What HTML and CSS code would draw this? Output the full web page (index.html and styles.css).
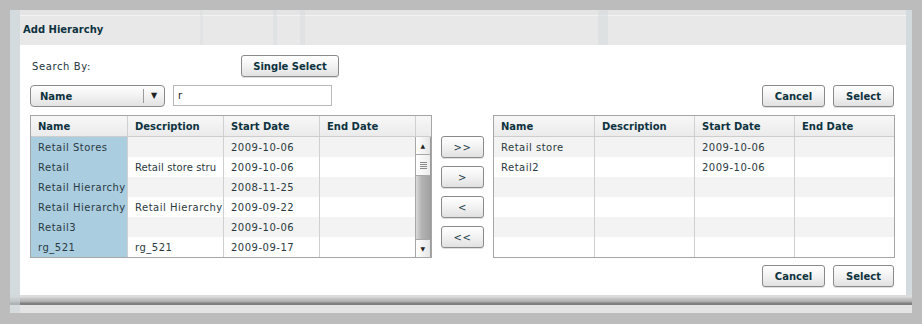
FILE: index.html
```html
<!DOCTYPE html>
<html lang="en">
<head>
    <meta charset="UTF-8">
    <meta name="viewport" content="width=device-width, initial-scale=1.0">
    <title>Add Hierarchy</title>
    <link rel="stylesheet" href="styles.css">
</head>
<body>

<div class="dialog">
    <div class="dialog-title">Add Hierarchy</div>

    <div class="dialog-body">
        <div class="search-row">
            <span class="search-label">Search By:</span>
            <button class="btn btn-single">Single Select</button>
        </div>

        <div class="filter-row">
            <div class="dropdown">
                <span class="dropdown-text">Name</span>
                <span class="dropdown-arrow">&#9660;</span>
            </div>
            <input class="search-input" type="text" value="r">
            <div class="actions">
                <button class="btn btn-cancel">Cancel</button>
                <button class="btn btn-select">Select</button>
            </div>
        </div>

        <div class="transfer">
            <!-- 可选列表 -->
            <table class="grid grid-left">
                <thead>
                    <tr>
                        <th class="c-name">Name</th>
                        <th class="c-col">Description</th>
                        <th class="c-col">Start Date</th>
                        <th class="c-col">End Date</th>
                        <th class="c-scroll"></th>
                    </tr>
                </thead>
                <tbody>
                    <tr>
                        <td class="sel">Retail Stores</td>
                        <td></td>
                        <td>2009-10-06</td>
                        <td></td>
                        <td class="scroll-cell" rowspan="6">
                            <div class="scrollbar">
                                <div class="sb-btn sb-up">&#9650;</div>
                                <div class="sb-thumb"><span></span></div>
                                <div class="sb-track"></div>
                                <div class="sb-btn sb-down">&#9660;</div>
                            </div>
                        </td>
                    </tr>
                    <tr>
                        <td class="sel">Retail</td>
                        <td class="tight">Retail store stru</td>
                        <td>2009-10-06</td>
                        <td></td>
                    </tr>
                    <tr>
                        <td class="sel">Retail Hierarchy</td>
                        <td></td>
                        <td>2008-11-25</td>
                        <td></td>
                    </tr>
                    <tr>
                        <td class="sel">Retail Hierarchy</td>
                        <td>Retail Hierarchy</td>
                        <td>2009-09-22</td>
                        <td></td>
                    </tr>
                    <tr>
                        <td class="sel">Retail3</td>
                        <td></td>
                        <td>2009-10-06</td>
                        <td></td>
                    </tr>
                    <tr>
                        <td class="sel">rg_521</td>
                        <td>rg_521</td>
                        <td>2009-09-17</td>
                        <td></td>
                    </tr>
                </tbody>
            </table>

            <!-- 移动按钮 -->
            <div class="move-buttons">
                <button class="btn btn-move">&gt;&gt;</button>
                <button class="btn btn-move">&gt;</button>
                <button class="btn btn-move">&lt;</button>
                <button class="btn btn-move">&lt;&lt;</button>
            </div>

            <!-- 已选列表 -->
            <table class="grid grid-right">
                <thead>
                    <tr>
                        <th class="r-first">Name</th>
                        <th class="r-col">Description</th>
                        <th class="r-col">Start Date</th>
                        <th class="r-col">End Date</th>
                    </tr>
                </thead>
                <tbody>
                    <tr><td>Retail store</td><td></td><td>2009-10-06</td><td></td></tr>
                    <tr><td>Retail2</td><td></td><td>2009-10-06</td><td></td></tr>
                    <tr><td></td><td></td><td></td><td></td></tr>
                    <tr><td></td><td></td><td></td><td></td></tr>
                    <tr><td></td><td></td><td></td><td></td></tr>
                    <tr><td></td><td></td><td></td><td></td></tr>
                </tbody>
            </table>
        </div>

        <div class="actions bottom-actions">
            <button class="btn btn-cancel">Cancel</button>
            <button class="btn btn-select">Select</button>
        </div>
    </div>

    <div class="dialog-foot"></div>
</div>

</body>
</html>
```

FILE: styles.css
```css
/* 全局样式 */
* {
    margin: 0;
    padding: 0;
    box-sizing: border-box;
}

body {
    background: #bcbcbc;
    font-family: 'DejaVu Sans', Verdana, sans-serif;
    font-size: 10px;
    color: #24363c;
}

/* 对话框外框 */
.dialog {
    margin: 10px 0 0 10px;
    width: 902px;
    height: 303px;
    display: flex;
    flex-direction: column;
    background:
        linear-gradient(to right, #d3dbde 0 10px, transparent 10px calc(100% - 6px), #d3dbde calc(100% - 6px)),
        linear-gradient(to right, transparent 190px, rgba(212, 218, 221, 0.35) 190px 193px, transparent 193px 263px,
            rgba(212, 218, 221, 0.45) 263px 267px, transparent 267px 290px, rgba(212, 218, 221, 0.45) 290px 295px,
            transparent 295px 588px, rgba(212, 218, 221, 0.5) 588px 598px, transparent 598px),
        linear-gradient(#e4e4e4 0 5px, #f3f3f3 5px 6px, #e8e8e8 6px);
}

.dialog-title {
    height: 35px;
    padding-left: 13px;
    line-height: 40px;
    font-weight: bold;
    color: #0d3340;
}

.dialog-body {
    background: #fff;
    height: 250px;
    margin: 0 6px 0 10px;
    padding: 10px 12px 0 10px;
    display: flex;
    flex-direction: column;
}

.dialog-foot {
    height: 18px;
    background:
        linear-gradient(to right, rgba(205, 214, 218, 0.6) 0 10px, transparent 10px),
        linear-gradient(#dcdcdc 0 2px, #cbcbcb 3px, #ababab 7px, #808080 8px 10px, #e4e4e4 10px);
}

/* 按钮样式 */
.btn {
    height: 22px;
    border: 1px solid #8a8a8a;
    border-radius: 3px;
    background: linear-gradient(#ffffff, #f2f2f2 50%, #e1e1e1);
    box-shadow: 0 1px 0 rgba(0, 0, 0, 0.12);
    font-family: 'DejaVu Sans', Verdana, sans-serif;
    font-size: 10px;
    font-weight: bold;
    color: #0d3340;
    cursor: pointer;
}

.btn-single { width: 98px; }
.btn-cancel { width: 63px; }
.btn-select { width: 61px; }

.btn-move {
    width: 43px;
    font-weight: normal;
    color: #1b3d48;
    letter-spacing: 0.5px;
}

/* 搜索行 */
.search-row {
    display: flex;
    align-items: center;
    height: 22px;
}

.search-label {
    width: 211px;
    padding-left: 2px;
    letter-spacing: 0.6px;
}

.filter-row {
    display: flex;
    align-items: flex-start;
    height: 22px;
    margin-top: 8px;
}

.dropdown {
    width: 135px;
    height: 22px;
    border: 1px solid #8a8a8a;
    border-radius: 4px;
    background: linear-gradient(#ffffff, #f1f1f1 50%, #e2e2e2);
    display: flex;
    align-items: center;
}

.dropdown-text {
    flex: 1;
    padding-left: 9px;
    font-weight: bold;
    color: #0d3340;
}

.dropdown-arrow {
    width: 21px;
    height: 14px;
    border-left: 1px solid #9a9a9a;
    font-size: 8px;
    line-height: 14px;
    text-align: center;
    color: #222;
}

.search-input {
    width: 159px;
    height: 21px;
    margin-left: 8px;
    border: 1px solid #b8b8b8;
    padding-left: 4px;
    font-family: 'DejaVu Sans', Verdana, sans-serif;
    font-size: 10px;
    color: #222;
}

.actions {
    display: flex;
    gap: 8px;
    margin-left: auto;
}

.bottom-actions {
    margin-top: 7px;
}

/* 表格样式 */
.transfer {
    display: flex;
    align-items: flex-start;
    gap: 9px;
    margin-top: 8px;
}

.grid {
    width: 402px;
    table-layout: fixed;
    border-collapse: separate;
    border-spacing: 0;
    border: 1px solid #a6a6a6;
}

.grid th {
    height: 21px;
    padding: 0 0 0 7px;
    border-bottom: 1px solid #cdcdcd;
    background: linear-gradient(#f7f7f7, #ebebeb);
    font-weight: bold;
    color: #0d3340;
    text-align: left;
    white-space: nowrap;
    overflow: hidden;
}

.grid td {
    height: 20px;
    padding: 0 0 0 7px;
    white-space: nowrap;
    overflow: hidden;
    color: #2a3a40;
    letter-spacing: 0.5px;
}

.grid td.tight {
    letter-spacing: 0.1px;
}

.grid th + th,
.grid td + td {
    border-left: 1px solid #d0d0d0;
}

.grid tbody tr:nth-child(odd) td { background: #f3f3f3; }
.grid tbody tr:nth-child(even) td { background: #fff; }

.grid tbody tr td.sel {
    background: #aacde0;
}

.c-name { width: 96px; }
.c-col { width: 96px; }
.c-scroll { width: 16px; }

.r-first { width: 100px; }
.r-col { width: 100px; }

/* 滚动条 */
.grid tbody tr td.scroll-cell {
    padding: 0;
    background: #fff;
    vertical-align: top;
    border-left: 1px solid #a6a6a6;
}

.scrollbar {
    width: 100%;
    height: 120px;
    display: flex;
    flex-direction: column;
    border-right: 1px solid #9a9a9a;
}

.sb-btn {
    height: 18px;
    background: linear-gradient(to right, #ffffff, #e6e6e6);
    border-bottom: 1px solid #a8a8a8;
    font-size: 6px;
    line-height: 18px;
    text-align: center;
    color: #222;
}

.sb-down {
    border-bottom: none;
    border-top: 1px solid #a8a8a8;
}

.sb-thumb {
    height: 21px;
    background: linear-gradient(to right, #ffffff, #ececec);
    border-bottom: 1px solid #a8a8a8;
    display: flex;
    align-items: center;
    justify-content: center;
}

.sb-thumb span {
    width: 7px;
    height: 7px;
    background: repeating-linear-gradient(#8a8a8a 0 1px, transparent 1px 2px);
}

.sb-track {
    flex: 1;
    background: linear-gradient(to right, #d9d9d9, #b3b3b3 40%, #a2a2a2);
}

/* 移动按钮 */
.move-buttons {
    display: flex;
    flex-direction: column;
    gap: 8px;
    padding-top: 21px;
}
```
